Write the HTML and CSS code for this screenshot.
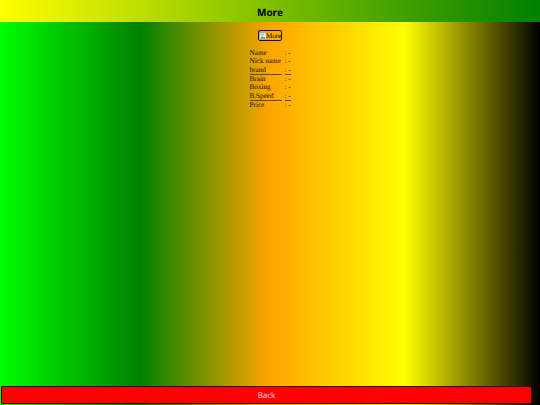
FILE: index.html
```html
<!DOCTYPE html>
<html lang="en">
<head>
  <meta charset="UTF-8" />
  <title>More</title>
  <link rel="stylesheet" href="styles.css">
</head>
<body>
  <header class="top-bar">More</header>

  <main class="content">
    <div class="more-button">
      <svg class="broken-img" viewBox="0 0 10 10" width="8" height="8">
        <path d="M0.5 0.5H7L9.5 3V9.5H0.5Z" fill="#eef3f7" stroke="#8a8f94" stroke-width="0.7"/>
        <path d="M1.5 8.5L4 5L6 7L7 6L8.5 8.5Z" fill="#5d9e4a"/>
        <rect x="1.5" y="1.5" width="5" height="3" fill="#a8cdea"/>
      </svg>
      <span class="more-label">More</span>
    </div>

    <div class="stats">
      <div class="stat-row"><span class="stat-name">Name</span><span class="stat-value">: -</span></div>
      <div class="stat-row"><span class="stat-name">Nick name</span><span class="stat-value">: -</span></div>
      <div class="stat-row underlined"><span class="stat-name">brand</span><span class="stat-value">: -</span></div>
      <div class="stat-row"><span class="stat-name">Brain</span><span class="stat-value">: -</span></div>
      <div class="stat-row"><span class="stat-name">Boxing</span><span class="stat-value">: -</span></div>
      <div class="stat-row underlined"><span class="stat-name">B.Speed</span><span class="stat-value">: -</span></div>
      <div class="stat-row"><span class="stat-name">Price</span><span class="stat-value">: -</span></div>
    </div>
  </main>

  <footer class="back-bar">Back</footer>
</body>
</html>
```

FILE: styles.css
```css
html, body {
  height: 100%;
}

body {
  margin: 0;
  display: flex;
  flex-direction: column;
  overflow: hidden;
  background: linear-gradient(to right, #00ff00 0%, #008000 26%, #ffa500 50%, #ffff00 75%, #000000 100%);
  font-family: "Liberation Serif", serif;
  text-rendering: geometricPrecision;
  color: #000;
}

.top-bar {
  height: 22px;
  line-height: 24px;
  text-align: center;
  font-family: "Comic Sans MS", "Open Sans", sans-serif;
  font-size: 10px;
  font-weight: bold;
  background: linear-gradient(to right, #ffff00, #008000);
}

.content {
  flex: 1;
  display: flex;
  flex-direction: column;
  align-items: center;
  padding-top: 8px;
}

.more-button {
  width: 22px;
  height: 9px;
  border: 1.5px solid #1a1000;
  border-radius: 2px;
  display: flex;
  align-items: center;
  overflow: hidden;
  font-size: 7px;
}

.broken-img {
  flex: none;
}

.more-label {
  margin-left: -1px;
}

.stats {
  margin-top: 7.5px;
  width: 41px;
  font-size: 7.2px;
  line-height: 8.67px;
  color: #110e00;
}

.stat-row {
  display: flex;
  gap: 3px;
  white-space: nowrap;
}

.stat-name {
  width: 32px;
  flex: none;
}

.stat-value {
  flex: 1;
}

.underlined .stat-name,
.underlined .stat-value {
  box-shadow: inset 0 -1px 0 #6b4a00;
}

.back-bar {
  margin: 0 8px 1px 1px;
  height: 16px;
  line-height: 17px;
  border: 1.5px solid #2a0a00;
  border-radius: 1px;
  background: #ff0000;
  text-align: center;
  font-family: "Comic Sans MS", "Open Sans", sans-serif;
  font-size: 8px;
  color: #ffe0e0;
}
```
